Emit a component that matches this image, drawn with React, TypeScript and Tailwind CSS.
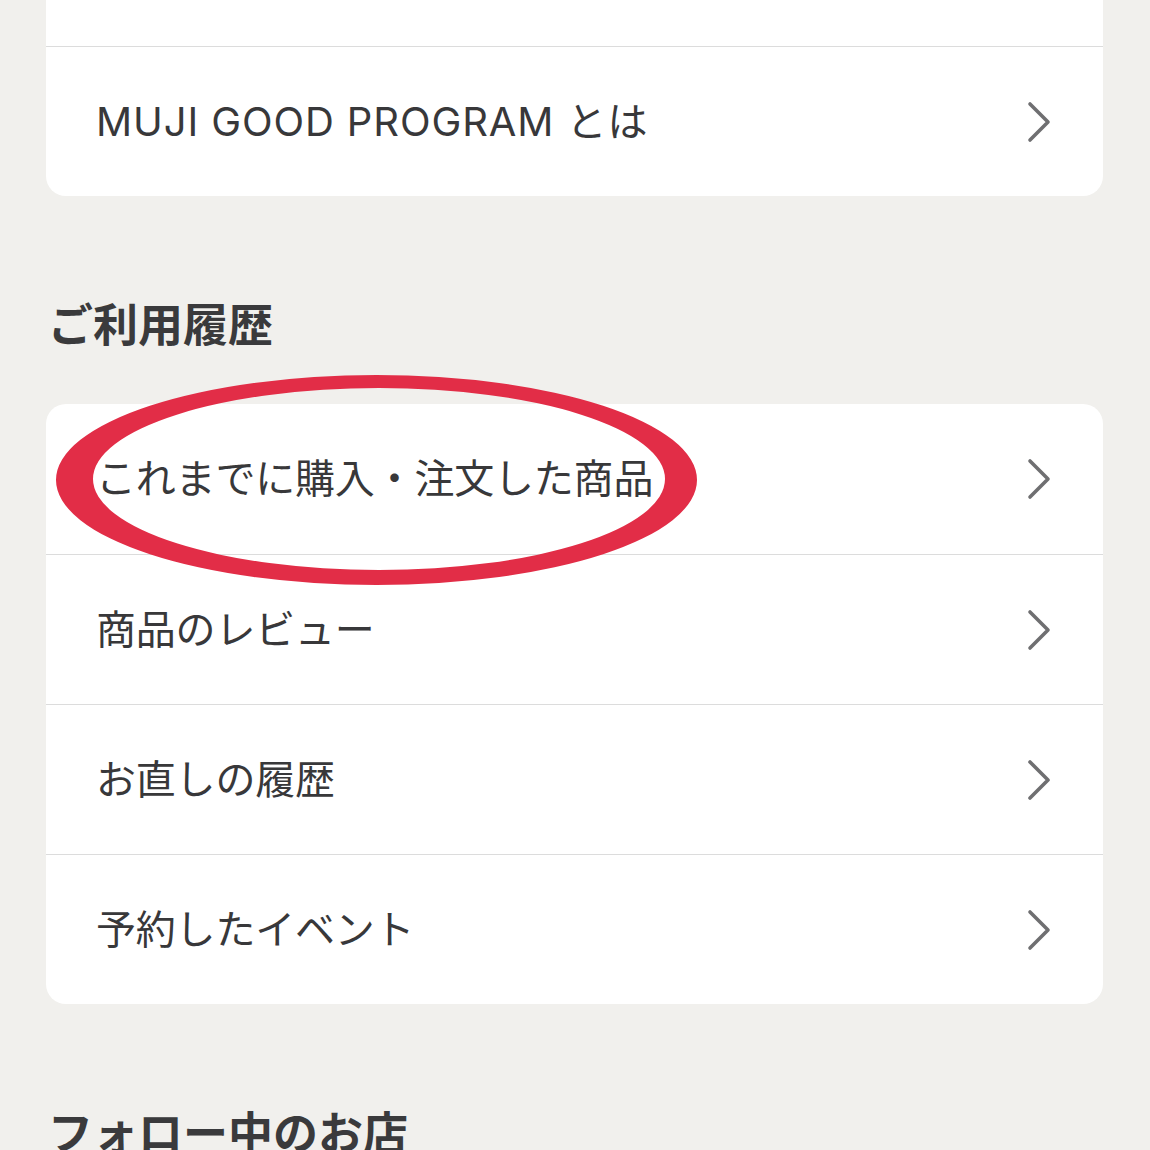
import React from "react";

const FONT = { fontFamily: 'Inter, "Noto Sans CJK JP", sans-serif' };

function Chevron() {
  return (
    <svg width="26" height="42" viewBox="0 0 26 42" fill="none">
      <path
        d="M4 3 L22 21 L4 39"
        stroke="#6f6f71"
        strokeWidth="3.6"
        strokeLinecap="round"
        strokeLinejoin="round"
      />
    </svg>
  );
}

function Row({ label, first, wide }: { label: string; first?: boolean; wide?: boolean }) {
  return (
    <div
      className={
        "flex h-[150px] items-center justify-between pl-[50px] pr-[51px] " +
        (first ? "" : "border-t border-[#dcdcdc]")
      }
    >
      <span
        className={
          "text-[40px] leading-none text-[#38383a] " + (wide ? "tracking-[0.9px]" : "tracking-[-0.2px]")
        }
      >
        {label}
      </span>
      <Chevron />
    </div>
  );
}

function Heading({ children }: { children: React.ReactNode }) {
  return (
    <div className="flex h-[60px] items-center pl-[2px] text-[45px] font-bold leading-none text-[#3a3a3c]">
      {children}
    </div>
  );
}

export default function App() {
  return (
    <div className="h-[1150px] w-[1150px] overflow-hidden bg-[#f1f0ed] pl-[46px] pr-[47px]" style={FONT}>
      <div className="-mt-[104px] overflow-hidden rounded-[20px] bg-white">
        <Row label="" first />
        <Row label="MUJI GOOD PROGRAM とは" wide />
      </div>

      <div className="mt-[99px] mb-[49px]">
        <Heading>ご利用履歴</Heading>
      </div>

      <div className="relative rounded-[20px] bg-white">
        <Row label="これまでに購入・注文した商品" first />
        <Row label="商品のレビュー" />
        <Row label="お直しの履歴" />
        <Row label="予約したイベント" />
        <svg
          className="pointer-events-none absolute left-0 top-[-34px]"
          width="660"
          height="220"
          viewBox="0 0 660 220"
        >
          <path
            fillRule="evenodd"
            fill="#e22d47"
            d="M10 110 a320.5 105 0 1 0 641 0 a320.5 105 0 1 0 -641 0 Z M47 109 a286 91 0 1 0 572 0 a286 91 0 1 0 -572 0 Z"
          />
        </svg>
      </div>

      <div className="mt-[99px]">
        <Heading>フォロー中のお店</Heading>
      </div>
    </div>
  );
}
